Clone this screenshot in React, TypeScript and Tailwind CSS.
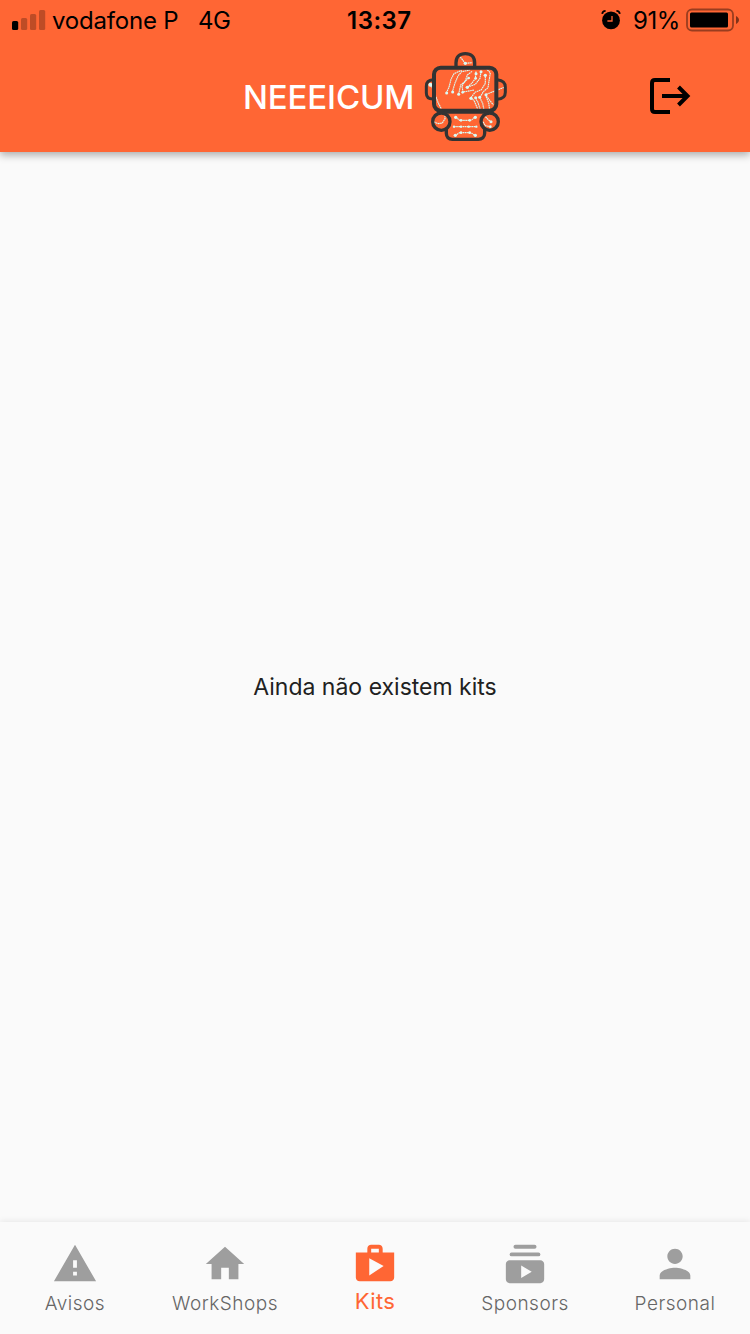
import type { ReactNode } from "react";

function SignalBars() {
  return (
    <svg className="h-5 w-[34px] shrink-0" viewBox="0 0 34 20">
      <rect x="0" y="11" width="6.2" height="9" rx="1.6" />
      <g opacity=".25">
        <rect x="9" y="8" width="6.2" height="12" rx="1.6" />
        <rect x="18" y="4" width="6.2" height="16" rx="1.6" />
        <rect x="27" y="0" width="6.2" height="20" rx="1.6" />
      </g>
    </svg>
  );
}

function AlarmIcon() {
  return (
    <svg className="h-5 w-5 shrink-0" viewBox="0 0 20 20">
      <circle cx="10" cy="10.4" r="8.9" />
      <path d="M1.2 3.8C1.4 2.2 2.6 1 4.6 0.9M15.4 0.9C17.4 1 18.6 2.2 18.8 3.8" fill="none" stroke="#000" strokeWidth="1.8" />
      <path d="M11 6V11H6.4" fill="none" stroke="#ff6634" strokeWidth="1.3" />
    </svg>
  );
}

function BatteryIcon() {
  return (
    <svg className="h-6 w-[54px] shrink-0" viewBox="0 0 54 24">
      <rect x="1" y="1.5" width="46" height="21" rx="5" fill="none" stroke="#000" strokeOpacity=".4" strokeWidth="1.8" />
      <rect x="4" y="4.5" width="38" height="15" rx="1.5" />
      <path d="M50 8C51.7 8.9 53 10.2 53 12S51.7 15.1 50 16Z" opacity=".5" />
    </svg>
  );
}

function RobotLogo() {
  return (
    <svg className="h-[92px] w-[84px] shrink-0" viewBox="27 15 252 276" fill="none">
      <g stroke="#d9fbf5" strokeWidth="3.4" strokeLinejoin="round" strokeDasharray="5 1.5">
        <path d="M136 36L146 49L150 55L172 53" />
        <path d="M94 144L102 127L108 103L117 86L140 76" />
        <path d="M112 141L120 114L129 93L140 80L165 75" />
        <path d="M131 147L137 120L150 110L157 90L171 79" />
        <path d="M161 99L147 112L141 124L144 141L178 135" />
        <path d="M157 127L169 116L181 101L183 79" />
        <path d="M157 127L181 118L195 100L198 80" />
        <path d="M168 158L180 142L199 134L211 115V91" />
        <path d="M195 157L205 140L219 128L226 83L215 73" />
        <path d="M168 158L178 168L188 192" />
        <path d="M180 158L188 170L196 194" />
        <path d="M194 157L203 175L207 195" />
        <path d="M273 125L242 137L211 149L235 180" />
        <path d="M211 149L221 173L224 195" />
        <path d="M43 116L53 130L61 150L69 172L81 196" />
        <path d="M57 231L69 236L82 234L90 221V211" />
        <path d="M207 211L221 225L228 231M204 230L211 242L226 245" />
        <path d="M122 216L134 226H168L181 216" />
        <path d="M117 245H184" />
        <path d="M120 272L134 263H168L181 272" />
      </g>
      <g fill="#d9fbf5">
        <circle cx="95" cy="144" r="4.5" />
        <circle cx="113" cy="141" r="4.5" />
        <circle cx="131" cy="148" r="4.5" />
        <circle cx="161" cy="99" r="4" />
        <circle cx="143" cy="142" r="4" />
        <circle cx="157" cy="127" r="5" />
        <circle cx="183" cy="86" r="4.5" />
        <circle cx="198" cy="80" r="4.5" />
        <circle cx="211" cy="91" r="5" />
        <circle cx="182" cy="100" r="4" />
        <circle cx="168" cy="160" r="5" />
        <circle cx="182" cy="158" r="4.5" />
        <circle cx="194" cy="157" r="4.5" />
        <circle cx="213" cy="149" r="4.5" />
        <circle cx="151" cy="55" r="5" />
        <circle cx="46" cy="119" r="6" />
        <circle cx="228" cy="230" r="4.5" />
        <circle cx="226" cy="245" r="4" />
        <circle cx="122" cy="217" r="5" /><circle cx="181" cy="217" r="5" />
        <circle cx="138" cy="226" r="4" /><circle cx="164" cy="226" r="4" />
        <circle cx="117" cy="245" r="3.5" /><circle cx="138" cy="245" r="3.5" />
        <circle cx="161" cy="245" r="3.5" /><circle cx="184" cy="245" r="3.5" />
        <circle cx="121" cy="271" r="5" /><circle cx="181" cy="271" r="5" />
        <circle cx="138" cy="263" r="4" /><circle cx="164" cy="263" r="4" />
      </g>
      <g stroke="#333" strokeWidth="10">
        <rect x="57" y="68" width="187" height="129" rx="20" strokeWidth="12" />
        <path d="M123 67V53C123 36 134 26 151 26S179 36 179 53V67" />
        <path d="M54 104C40 105 34 112 34 123V144C34 155 41 162 54 162" strokeWidth="9" />
        <path d="M247 104C264 106 271 113 271 126V142C271 154 263 162 247 163" strokeWidth="9" />
        <circle cx="79" cy="230" r="26" />
        <circle cx="224" cy="230" r="26" />
        <path d="M94 251V265C94 276 101 283 112 283H190C201 283 209 276 209 265V251" />
        <path d="M88 201H211" />
      </g>
    </svg>
  );
}

function LogoutIcon() {
  return (
    <svg className="h-9 w-[42px] shrink-0" viewBox="0 0 42 36" fill="none" stroke="#000" strokeWidth="4">
      <path d="M20 2H5Q2 2 2 5V31Q2 34 5 34H20" />
      <path d="M12 18H38" />
      <path d="M28.5 9L37.5 18L28.5 27" />
    </svg>
  );
}

type Tab = { label: string; icon: ReactNode; active?: boolean };

const tabs: Tab[] = [
  { label: "Avisos", icon: <path d="M1 21h22L12 2 1 21zm12-3h-2v-2h2v2zm0-4h-2v-4h2v4z" /> },
  { label: "WorkShops", icon: <path d="M10 20v-6h4v6h5v-8h3L12 3 2 12h3v8z" /> },
  {
    label: "Kits",
    active: true,
    icon: <path fillRule="evenodd" d="M16 6V4c0-1.11-.89-2-2-2h-4c-1.11 0-2 .89-2 2v2H2v13c0 1.11.89 2 2 2h16c1.11 0 2-.89 2-2V6h-6zm-6-2h4v2h-4V4zM9 18V9l7.5 4L9 18z" />,
  },
  {
    label: "Sponsors",
    icon: (
      <>
        <rect x="6" y="2" width="12" height="2" rx="1" />
        <rect x="4" y="6" width="16" height="2" rx="1" />
        <path fillRule="evenodd" d="M22 12v8c0 1.1-.9 2-2 2H4c-1.1 0-2-.9-2-2v-8c0-1.1.9-2 2-2h16c1.1 0 2 .9 2 2zm-6.5 4l-5.5-3.27v6.53L15.5 16z" />
      </>
    ),
  },
  { label: "Personal", icon: <path d="M12 12c2.21 0 4-1.79 4-4s-1.79-4-4-4-4 1.79-4 4 1.79 4 4 4zm0 2c-2.67 0-8 1.34-8 4v2h16v-2c0-2.66-5.33-4-8-4z" /> },
];

export default function App() {
  return (
    <div className="flex h-[1334px] w-[750px] flex-col overflow-hidden bg-[#fafafa] font-['Inter','Liberation_Sans',sans-serif] whitespace-nowrap">
      <header className="flex h-[152px] shrink-0 flex-col bg-[#ff6634] text-black shadow-[0_3px_8px_rgba(0,0,0,0.32)]">
        <div className="flex h-10 items-center text-[24px] leading-10">
          <div className="flex w-[347px] items-center pl-3">
            <SignalBars />
            <span className="mt-[2px] ml-[6px] w-[146px] leading-10 tracking-[-0.2px]">vodafone P</span>
            <span className="mt-[2px] tracking-[-0.4px]">4G</span>
          </div>
          <span className="mt-[2px] w-[254px] font-semibold tracking-[0.5px]">13:37</span>
          <AlarmIcon />
          <span className="mt-[2px] ml-3 w-[53px] tracking-[-0.4px]">91%</span>
          <BatteryIcon />
        </div>
        <div className="flex h-28 items-start pl-[243px]">
          <h1 className="mt-[37px] w-[181px] text-[33px] leading-10 font-medium tracking-[-0.15px] text-white">NEEEICUM</h1>
          <div className="mt-[10px] flex"><RobotLogo /></div>
          <button className="mt-[38px] ml-[142px]" aria-label="Sair"><LogoutIcon /></button>
        </div>
      </header>
      <main className="flex flex-1 items-center justify-center text-[23px] text-[#212121]">
        <p className="pt-px">Ainda não existem kits</p>
      </main>
      <nav className="grid h-28 shrink-0 grid-cols-5 shadow-[0_-1px_6px_rgba(0,0,0,0.08)]">
        {tabs.map((tab) => (
          <a key={tab.label} className={tab.active ? "flex flex-col items-center pt-[19px] text-[#ff6634]" : "flex flex-col items-center pt-[19px] text-[#9e9e9e]"}>
            <svg className="h-[46px] w-[46px]" viewBox="0 0 24 24" fill="currentColor">{tab.icon}</svg>
            <span className={tab.active ? "text-[22px] leading-7 tracking-[0.4px]" : "mt-[3px] text-[19px] leading-7 font-light tracking-[0.5px] text-[#666666]"}>{tab.label}</span>
          </a>
        ))}
      </nav>
    </div>
  );
}
